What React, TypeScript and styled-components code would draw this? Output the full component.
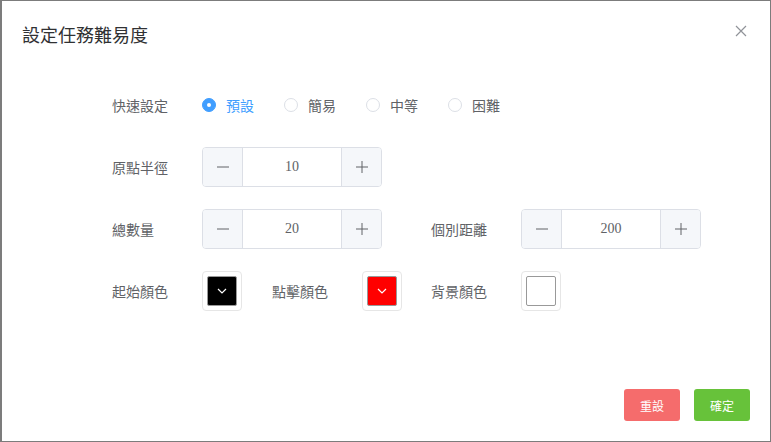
import React, { useState } from "react";
import styled, { createGlobalStyle } from "styled-components";

const Global = createGlobalStyle`
  html, body { margin: 0; padding: 0; background: #fff; }
  body { font-family: "Noto Sans CJK TC", "Noto Sans", sans-serif; }
  * { box-sizing: border-box; }
`;

const Dialog = styled.div`
  width: 771px;
  height: 442px;
  border: 1px solid #7c7c7c;
  border-left-width: 2px;
  background: #fff;
  display: flex;
  flex-direction: column;
`;

const Header = styled.div`
  display: flex;
  justify-content: space-between;
  align-items: flex-start;
  padding: 21px 20px 0 20px;
  height: 62px;
`;

const Title = styled.div`
  font-size: 18px;
  line-height: 24px;
  color: #303133;
`;

const Close = styled.button`
  border: 0;
  background: none;
  padding: 0;
  margin-top: 1px;
  margin-right: 1px;
  width: 16px;
  height: 16px;
  display: flex;
  align-items: center;
  justify-content: center;
  cursor: pointer;
`;

const Body = styled.div`
  flex: 1;
  padding: 22px 0 0 110px;
`;

const FormGrid = styled.div`
  display: grid;
  grid-template-columns: 160px 159px 160px 160px;
  grid-auto-rows: 40px;
  row-gap: 22px;
`;

const Item = styled.div<{ $span?: number }>`
  grid-column: span ${(p) => p.$span ?? 1};
  display: flex;
  align-items: center;
`;

const Label = styled.div`
  width: 90px;
  font-size: 14px;
  color: #606266;
  flex-shrink: 0;
`;

const RadioGroup = styled.div`
  display: flex;
  align-items: center;
`;

const RadioItem = styled.label<{ $on?: boolean }>`
  display: flex;
  align-items: center;
  margin-right: 30px;
  font-size: 14px;
  color: ${(p) => (p.$on ? "#409eff" : "#606266")};
  cursor: pointer;
`;

const RadioDot = styled.span<{ $on?: boolean }>`
  width: 14px;
  height: 14px;
  border-radius: 50%;
  border: 1px solid ${(p) => (p.$on ? "#409eff" : "#dcdfe6")};
  background: ${(p) => (p.$on ? "#409eff" : "#fff")};
  margin-right: 10px;
  display: flex;
  align-items: center;
  justify-content: center;
  &::after {
    content: "";
    width: 4px;
    height: 4px;
    border-radius: 50%;
    background: #fff;
    display: ${(p) => (p.$on ? "block" : "none")};
  }
`;

const Num = styled.div`
  width: 180px;
  height: 40px;
  border: 1px solid #dcdfe6;
  border-radius: 4px;
  display: flex;
  overflow: hidden;
`;

const NumBtn = styled.button<{ $side: "l" | "r" }>`
  width: 40px;
  height: 100%;
  border: 0;
  ${(p) => (p.$side === "l" ? "border-right" : "border-left")}: 1px solid #dcdfe6;
  background: #f5f7fa;
  color: #606266;
  display: flex;
  align-items: center;
  justify-content: center;
  padding: 0;
  cursor: pointer;
`;

const NumValue = styled.div`
  flex: 1;
  display: flex;
  align-items: center;
  justify-content: center;
  font-family: "Liberation Serif", serif;
  font-size: 14px;
  color: #606266;
`;

const Picker = styled.div`
  width: 40px;
  height: 40px;
  border: 1px solid #e6e6e6;
  border-radius: 4px;
  padding: 4px;
`;

const Swatch = styled.div<{ $c: string }>`
  width: 30px;
  height: 30px;
  border: 1px solid #999;
  border-radius: 2px;
  background: ${(p) => p.$c};
  display: flex;
  align-items: center;
  justify-content: center;
`;

const Footer = styled.div`
  display: flex;
  justify-content: flex-end;
  gap: 14px;
  padding: 0 20px 20px 0;
`;

const Btn = styled.button<{ $c: string }>`
  height: 32px;
  width: 56px;
  border: 0;
  border-radius: 3px;
  background: ${(p) => p.$c};
  color: #fff;
  font-size: 12px;
  font-family: "Noto Sans CJK TC", sans-serif;
  cursor: pointer;
`;

const Minus = () => (
  <svg width="14" height="14" viewBox="0 0 14 14">
    <path d="M1 7h12" stroke="#606266" strokeWidth="1" />
  </svg>
);
const Plus = () => (
  <svg width="14" height="14" viewBox="0 0 14 14">
    <path d="M1 7h12M7 1v12" stroke="#606266" strokeWidth="1" />
  </svg>
);
const Chevron = () => (
  <svg width="12" height="8" viewBox="0 0 12 8">
    <path d="M2 2l4 4 4-4" stroke="#fff" strokeWidth="1.2" fill="none" />
  </svg>
);

const NumberInput = ({ value }: { value: number }) => (
  <Num>
    <NumBtn $side="l"><Minus /></NumBtn>
    <NumValue>{value}</NumValue>
    <NumBtn $side="r"><Plus /></NumBtn>
  </Num>
);

const ColorPicker = ({ color }: { color: string }) => (
  <Picker>
    <Swatch $c={color}><Chevron /></Swatch>
  </Picker>
);

export default function App() {
  const [mode, setMode] = useState("預設");
  return (
    <>
      <Global />
      <Dialog>
        <Header>
          <Title>設定任務難易度</Title>
          <Close aria-label="close">
            <svg width="12" height="12" viewBox="0 0 12 12">
              <path d="M1 1l10 10M11 1L1 11" stroke="#909399" strokeWidth="1.2" />
            </svg>
          </Close>
        </Header>
        <Body>
          <FormGrid>
            <Item $span={4}>
              <Label>快速設定</Label>
              <RadioGroup>
                {["預設", "簡易", "中等", "困難"].map((m) => (
                  <RadioItem key={m} $on={mode === m} onClick={() => setMode(m)}>
                    <RadioDot $on={mode === m} />
                    {m}
                  </RadioItem>
                ))}
              </RadioGroup>
            </Item>
            <Item $span={4}>
              <Label>原點半徑</Label>
              <NumberInput value={10} />
            </Item>
            <Item $span={2}>
              <Label>總數量</Label>
              <NumberInput value={20} />
            </Item>
            <Item $span={2}>
              <Label>個別距離</Label>
              <NumberInput value={200} />
            </Item>
            <Item>
              <Label>起始顏色</Label>
              <ColorPicker color="#000000" />
            </Item>
            <Item>
              <Label>點擊顏色</Label>
              <ColorPicker color="#ff0000" />
            </Item>
            <Item>
              <Label>背景顏色</Label>
              <ColorPicker color="#ffffff" />
            </Item>
          </FormGrid>
        </Body>
        <Footer>
          <Btn $c="#f56c6c">重設</Btn>
          <Btn $c="#67c23a">確定</Btn>
        </Footer>
      </Dialog>
    </>
  );
}
